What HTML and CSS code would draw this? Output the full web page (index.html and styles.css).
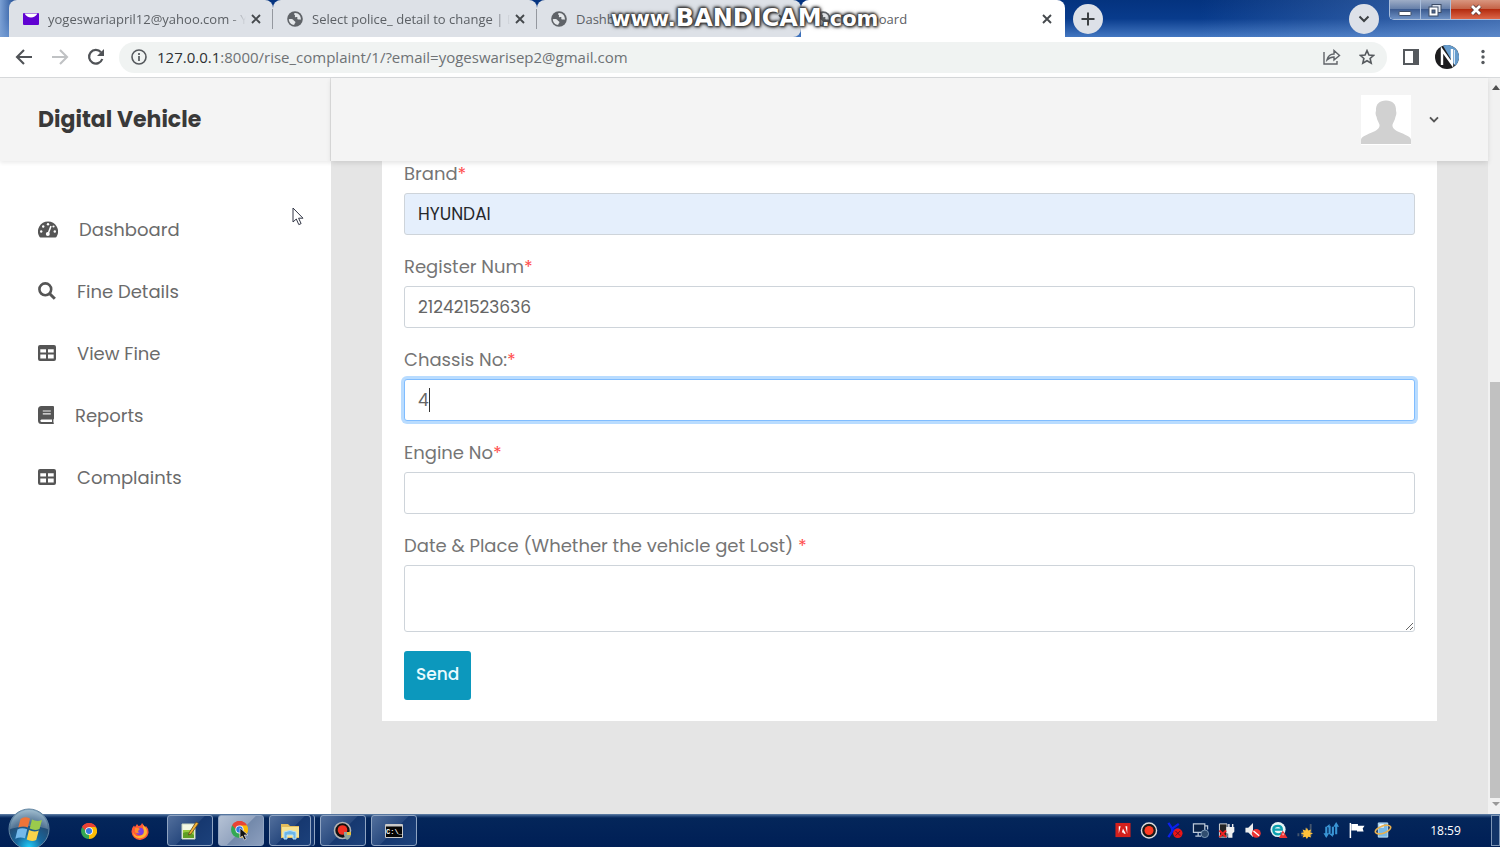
FILE: index.html
```html
<!DOCTYPE html>
<html lang="en">
<head>
<meta charset="utf-8">
<title>Dashboard</title>
<link rel="stylesheet" href="styles.css">
</head>
<body>
<svg class="defs" aria-hidden="true">
  <symbol id="globe" viewBox="0 0 16 16"><circle cx="8" cy="8" r="7.8" fill="#5f6368"/><path d="M1.8 8.300c2-.5 4.200-.2 4.800.9.500 1.100 1.700.8 1.800 2 0 1-1.200 1.300-1.200 2.800C4.300 13.900 2 11.500 1.800 8.300zM8 2c-1.600.5-1 1.500-.2 1.900.9.500-.5 1.400.3 2 .900.700 1.700-.4 2.300.5.500.8-.8 1.300.2 1.900 1.100.6 1.900-.1 3.300.4C14.200 5 11.600 1.800 8 2z" fill="#e4e7ea"/></symbol>
  <symbol id="close" viewBox="0 0 12 12"><path d="M2 2l8 8M10 2l-8 8" stroke="#45494d" stroke-width="1.900"/></symbol>
  <symbol id="table" viewBox="0 0 18 16"><path fill-rule="evenodd" fill="#555" d="M2 0h14q2 0 2 2v12q0 2-2 2H2q-2 0-2-2V2q0-2 2-2zM2.300 4.200v3.300H8V4.200zM10 4.200v3.300h5.700V4.200zM2.300 9.500v3.900H8V9.500zM10 9.500v3.900h5.700V9.500z"/></symbol>
  <symbol id="chrome" viewBox="0 0 20 20"><path d="M10 10L1.400 5A10 10 0 0 1 18.700 5z" fill="#e94335"/><path d="M10 10L18.700 5A10 10 0 0 1 10 20z" fill="#fbbc05"/><path d="M10 10v10A10 10 0 0 1 1.400 5z" fill="#34a853"/><path d="M10 5h8.700L14 12z" fill="#fbbc05"/><path d="M1.400 5L6 13l4-3z" fill="#34a853"/><path d="M1.400 5A10 10 0 0 1 18.700 5H10l-4 5z" fill="#e94335"/><circle cx="10" cy="10" r="4.800" fill="#fff"/><circle cx="10" cy="10" r="3.800" fill="#3478e5"/></symbol>
</svg>

<div class="window">
  <div class="tabstrip">
    <div class="tab">
      <svg class="favicon" viewBox="0 0 16 16"><rect y="2" width="16" height="12" rx="1" fill="#6001d2"/><path d="M1.500 2.500h13Q12 6.500 8 6.500T1.500 2.500z" fill="#fff"/></svg>
      <span class="tab-title">yogeswariapril12@yahoo.com - Y</span>
      <button class="tab-close" aria-label="Close tab"><svg width="12" height="12"><use href="#close"/></svg></button>
    </div>
    <div class="tab">
      <svg class="favicon"><use href="#globe"/></svg>
      <span class="tab-title">Select police_ detail to change | D</span>
      <button class="tab-close" aria-label="Close tab"><svg width="12" height="12"><use href="#close"/></svg></button>
    </div>
    <div class="tab tab-last">
      <svg class="favicon"><use href="#globe"/></svg>
      <span class="tab-title">Dashboard</span>
      <button class="tab-close" aria-label="Close tab"><svg width="12" height="12"><use href="#close"/></svg></button>
    </div>
    <div class="tab tab-active">
      <svg class="favicon"><use href="#globe"/></svg>
      <span class="tab-title">Dashboard</span>
      <button class="tab-close" aria-label="Close tab"><svg width="12" height="12"><use href="#close"/></svg></button>
    </div>
    <button class="round" aria-label="New tab"><svg width="14" height="14" viewBox="0 0 14 14"><path d="M7 .5v13M.5 7h13" stroke="#3c4043" stroke-width="2"/></svg></button>
    <button class="round round-search" aria-label="Search tabs"><svg width="12" height="8" viewBox="0 0 12 8"><path d="M1.500 1.500L6 6l4.500-4.500" fill="none" stroke="#3c4043" stroke-width="2"/></svg></button>
    <div class="controls">
      <button class="control" aria-label="Minimize"><svg width="14" height="16" viewBox="0 0 14 16"><rect x="1" y="9.500" width="12" height="4" rx="1" fill="#fff" stroke="#3d4c66"/></svg></button>
      <button class="control" aria-label="Restore"><svg width="14" height="14" viewBox="0 0 14 14"><rect x="4" y="1.500" width="9" height="8" fill="#dce3ee" stroke="#3d4c66"/><rect x="1" y="4" width="9" height="9" fill="#fff" stroke="#3d4c66"/><rect x="4" y="7" width="3" height="3" fill="#4d6590" stroke="#3d4c66"/></svg></button>
      <button class="control control-close" aria-label="Close"><svg width="14" height="12" viewBox="0 0 14 12"><path d="M3 2l8 8M11 2l-8 8" stroke="#5b3a3a" stroke-width="4.500"/><path d="M3 2l8 8M11 2l-8 8" stroke="#fff" stroke-width="2.800"/></svg></button>
    </div>
    <div class="watermark"><span class="mark-small">www.</span>BANDICAM<span class="mark-small">.com</span></div>
  </div>

  <div class="toolbar">
    <button class="tool" aria-label="Back"><svg viewBox="0 0 18 18"><path d="M17 9H2.500M9 2L2 9l7 7" fill="none" stroke="#505357" stroke-width="2.100"/></svg></button>
    <button class="tool" aria-label="Forward"><svg viewBox="0 0 18 18"><path d="M1 9h14.500M9 2l7 7-7 7" fill="none" stroke="#c0c2c4" stroke-width="2.100"/></svg></button>
    <button class="tool" aria-label="Reload"><svg viewBox="0 0 18 18"><path d="M15.300 11A6.800 6.800 0 1 1 14 4.300" fill="none" stroke="#505357" stroke-width="2.200"/><path d="M17 1v7h-7z" fill="#505357"/></svg></button>
    <div class="omnibox">
      <svg width="16" height="16" viewBox="0 0 16 16"><circle cx="8" cy="8" r="7" fill="none" stroke="#55595d" stroke-width="1.600"/><path d="M8 7v5M8 4v2" stroke="#55595d" stroke-width="1.700"/></svg>
      <div class="url"><span class="host">127.0.0.1</span>:8000/rise_complaint/1/?email=yogeswarisep2@gmail.com</div>
      <button class="plain" aria-label="Share"><svg width="18" height="16" viewBox="0 0 18 16"><path d="M1 3v12h13v-3M4 11c1-4 3-6 7-6V1.500L16.500 6.500 11 11V8C8 8 6 9 4 11z" fill="none" stroke="#5f6368" stroke-width="1.400"/></svg></button>
      <button class="plain" aria-label="Bookmark"><svg width="16" height="16" viewBox="0 0 18 18"><path d="M9 1.800l2.200 4.900 5.300.5-4 3.500 1.200 5.300L9 13.200 4.300 16l1.200-5.300-4-3.500 5.300-.5z" fill="none" stroke="#55595d" stroke-width="1.800"/></svg></button>
    </div>
    <div class="tools-end">
      <button class="plain" aria-label="Side panel"><svg width="16" height="16" viewBox="0 0 16 16"><rect x="1" y="1" width="14" height="14" fill="#fff" stroke="#55595d" stroke-width="2"/><path d="M10 1h5v14h-5z" fill="#55595d"/></svg></button>
      <button class="plain" aria-label="Profile"><svg width="24" height="24" viewBox="0 0 24 24"><circle cx="12" cy="12" r="12" fill="#1c1c1e"/><path d="M8 .7A12 12 0 0 1 20 21z" fill="#659bcc"/><path d="M7 20V5l10 14V4" fill="none" stroke="#fff" stroke-width="2.400"/><path d="M19.500 5v14" stroke="#d8e7f5"/></svg></button>
      <button class="plain menu" aria-label="Menu"><svg width="4" height="16" viewBox="0 0 4 16"><circle cx="2" cy="2.500" r="1.700" fill="#55595d"/><circle cx="2" cy="8" r="1.700" fill="#55595d"/><circle cx="2" cy="13.500" r="1.700" fill="#55595d"/></svg></button>
    </div>
  </div>

  <div class="viewport">
    <aside class="sidebar">
      <div class="brand">Digital Vehicle</div>
      <nav class="nav">
        <a class="nav-link" href="#"><svg width="20" height="17" viewBox="0 0 20 17"><path d="M10 .5A10 10 0 0 0 1.300 15.500q.4.900 1.300.9h14.800q.9 0 1.300-.9A10 10 0 0 0 10 .5z" fill="#555"/><path d="M9.800 13.500L13 5" stroke="#fff" stroke-width="1.500"/><circle cx="9.800" cy="13" r="2" fill="#fff"/><g fill="#fff"><circle cx="10" cy="3.300" r="1.200"/><circle cx="5.200" cy="5.500" r="1.200"/><circle cx="3.200" cy="10.500" r="1.200"/><circle cx="15.500" cy="5.500" r="1.100"/><circle cx="16.800" cy="10.500" r="1.200"/></g></svg>Dashboard</a>
        <a class="nav-link" href="#"><svg width="18" height="18" viewBox="0 0 18 18"><circle cx="7.300" cy="7.300" r="5.900" fill="none" stroke="#555" stroke-width="2.600"/><path d="M11.500 11.500l5.300 5.300" stroke="#555" stroke-width="3"/></svg>Fine Details</a>
        <a class="nav-link" href="#"><svg width="18" height="16"><use href="#table"/></svg>View Fine</a>
        <a class="nav-link" href="#"><svg width="16" height="18" viewBox="0 0 16 18"><path fill-rule="evenodd" fill="#555" d="M3.500 0H15q1 0 1 1v11.500q0 .7-.6 1v3q.6.200.6.800 0 .7-1 .7H3.500Q0 18 0 14.500v-11Q0 0 3.500 0zM3.500 13.500q-1.200.2-1.200 1.200t1.200 1.200H14v-2.400z"/><path d="M4.800 5h8M4.800 7.800h8" stroke="#eee" stroke-width="1.200"/></svg>Reports</a>
        <a class="nav-link" href="#"><svg width="18" height="16"><use href="#table"/></svg>Complaints</a>
      </nav>
    </aside>
    <main class="main">
      <header class="header">
        <svg width="50" height="50" viewBox="0 0 50 50"><path d="M0 0h50v50H0z" fill="#fff"/><path d="M25 5.500c-6.500 0-10.500 3.500-10 10.500-.6 1-.6 4 .6 6 .5 3.500 2.600 6 3 8 0 4-4 6-9 8C4.500 40.300 0 42 0 45v4h50v-4c0-3-4.500-4.700-9.600-7-5-2-9-4-9-8 .4-2 2.500-4.500 3-8 1.200-2 1.200-5 .6-6 .5-7-3.500-10.500-10-10.500z" fill="#d1d1d1"/></svg>
        <button class="plain" aria-label="Account menu"><svg width="10" height="7" viewBox="0 0 10 7"><path d="M1 1.300l4 4 4-4" fill="none" stroke="#555" stroke-width="1.900"/></svg></button>
      </header>
      <form class="card">
        <div class="field">
          <label for="brand">Brand<span class="req">*</span></label>
          <input class="input input-filled" id="brand" type="text" value="HYUNDAI">
        </div>
        <div class="field">
          <label for="register">Register Num<span class="req">*</span></label>
          <input class="input" id="register" type="text" value="212421523636">
        </div>
        <div class="field">
          <label for="chassis">Chassis No:<span class="req">*</span></label>
          <div class="focus-wrap"><input class="input input-focus" id="chassis" type="text" value="4"><span class="caret"></span></div>
        </div>
        <div class="field">
          <label for="engine">Engine No<span class="req">*</span></label>
          <input class="input" id="engine" type="text">
        </div>
        <div class="field">
          <label for="place">Date &amp; Place (Whether the vehicle get Lost) <span class="req">*</span></label>
          <textarea class="input textarea" id="place"></textarea>
        </div>
        <button class="send" type="button">Send</button>
      </form>
    </main>
    <div class="scrollbar">
      <svg class="arrow" viewBox="0 0 10 16"><path d="M2 12l4-5 4 5z" fill="#505050"/></svg>
      <div class="track-space"></div>
      <div class="thumb"></div>
      <svg class="arrow" viewBox="0 0 10 16"><path d="M2 4l4 4 4-4z" fill="#999"/></svg>
    </div>
    <svg class="pointer" viewBox="0 0 12 19"><path d="M1 1v14l3.300-3 2.500 5.600 2.300-1-2.500-5.400H11z" fill="#fff" stroke="#333746"/></svg>
  </div>

  <div class="taskbar">
    <button class="orb" aria-label="Start"><svg width="42" height="42" viewBox="0 0 42 42"><defs><radialGradient id="orb" cx=".5" cy=".95" r=".95"><stop offset="0" stop-color="#20cdfa"/><stop offset=".35" stop-color="#19669b"/><stop offset=".65" stop-color="#234e77"/><stop offset="1" stop-color="#8bb0c6"/></radialGradient></defs><circle cx="21" cy="21" r="20" fill="url(#orb)" stroke="#6486a2"/><path d="M2 21a19 19 0 0 1 38 0q-18-6-38 0z" fill="#fff" opacity=".22"/><path d="M12.500 11q4-3 9.500-.5l-2.200 9q-4.500-2.200-9.500 0z" fill="#ee7439"/><path d="M24 11.500q5 2.500 10 .5l-2.500 9q-4.500 2-9.800-.5z" fill="#9bca4c"/><path d="M9.500 21.500q4.500-2.500 9.700-.2l-2.200 9q-5-2-9.700.5z" fill="#74b9eb"/><path d="M21 22q5 2.500 9.800.5l-2.600 9.500q-4.300 2.200-9.500-.4z" fill="#fad34b"/></svg></button>
    <button class="pin" aria-label="Chrome"><svg width="16" height="16"><use href="#chrome"/></svg></button>
    <button class="pin" aria-label="Firefox"><svg width="18" height="18" viewBox="0 0 18 18"><path d="M6 2l1.500 2Q10 4 11 1l3 4 1-1q3 3 2.500 7A8.600 8.600 0 0 1 .5 10Q.3 6 3 3.500L4 5z" fill="#ff5a36"/><path d="M12 3q6 5 3 10-3 4-8 3-5-1-5-6 2 5 6 4 6 0 4-11z" fill="#ffb62e"/><circle cx="9" cy="9.500" r="3.800" fill="#7b3fe0"/><path d="M4 6q3-1 5 1L7 9q0 2 2 2-3 1-5-1z" fill="#ff8a2a"/></svg></button>
    <button class="task" aria-label="Notepad++"><svg width="20" height="20" viewBox="0 0 20 20"><path d="M2 3h13v15H2z" fill="#f3f8e4" stroke="#c9d5be"/><path d="M3 9h11v8H3z" fill="#9acb3e"/><path d="M3 12q5-3 11 2v3H3z" fill="#5f9e25"/><path d="M9 12L16 1l2.500 1.500L11 13l-2.500 1z" fill="#f1b135" stroke="#5d431e" stroke-width=".8"/></svg></button>
    <button class="task task-active" aria-label="Chrome window"><svg width="20" height="20" viewBox="0 0 20 20"><use href="#chrome" width="17" height="17"/><path d="M9 7v10l2.300-2 2 4 2-1-2-4H17z" fill="#111" stroke="#dde" stroke-width=".7"/></svg></button>
    <button class="task task-stack" aria-label="File explorer"><svg width="20" height="20" viewBox="0 0 20 20"><path d="M1 3h7l2 2h9v12H1z" fill="#e5bd5b"/><path d="M2 6h17v10H2z" fill="#f8e391"/><path d="M4 18v-7q6-3 12 0v7h-3v-4H7v4z" fill="#6db6e8" stroke="#b9e2f8"/></svg></button>
    <button class="task" aria-label="Bandicam"><svg width="20" height="20" viewBox="0 0 20 20"><circle cx="9.500" cy="9.500" r="8" fill="#111" stroke="#b4b4b4" stroke-width="1.600"/><circle cx="9.500" cy="9" r="4.800" fill="#f23122"/><path d="M11 11h7v3q-1 4-4 5-3-2-3-5z" fill="#8aa39b"/><path d="M14 11h4v3h-4z" fill="#e4bf3f"/></svg></button>
    <button class="task" aria-label="Command prompt"><svg width="18" height="14" viewBox="0 0 18 14"><path d="M.5.500h17v13H.5z" fill="#050505" stroke="#c9c9c9"/><path d="M1 1h16v1.500H1z" fill="#c9c9c9"/><text class="prompt" x="1" y="10">C:\_</text></svg></button>
    <div class="tray">
      <svg viewBox="0 0 18 18"><path d="M1 1h16v15H1z" fill="#d4201c"/><path d="M4.500 12.500V4.500h2zM13.500 12.500V4.500h-2zM9 7l3 5.500h-2L9.300 11H7.800z" fill="#fff"/></svg>
      <svg viewBox="0 0 18 18"><circle cx="9" cy="9" r="8" fill="#181818" stroke="#dedede" stroke-width="1.500"/><circle cx="9" cy="9" r="4.800" fill="#ff3b23"/></svg>
      <svg viewBox="0 0 18 18"><path d="M2 1l4 6 7-5M2 16l4-6 7-3M6 7v4" fill="none" stroke="#0b20ee" stroke-width="2.500"/><circle cx="12" cy="12" r="5" fill="#ea1616"/><path d="M9.500 9.500l5 5M14.500 9.500l-5 5" stroke="#5b0c25"/></svg>
      <svg viewBox="0 0 18 18"><path d="M1 2h12v9H1zM6 11v4M3 15h6M13 4h3v4" fill="#0b2348" stroke="#bdc9d9" stroke-width="1.300"/><circle cx="13" cy="12.500" r="4" fill="#304d70" stroke="#7f9bb8"/></svg>
      <svg viewBox="0 0 18 18"><path d="M1 2h8v14H1z" fill="#242424" stroke="#ddd"/><path d="M9 6h7v4l-2 2v4h-3v-4l-2-1zM11 2v4M15 2v4" fill="#eee" stroke="#eee" stroke-width="1.500"/><path d="M1 9l7 7M8 9l-7 7" stroke="#e22" stroke-width="2.200"/></svg>
      <svg viewBox="0 0 18 18"><path d="M1 6h3l5-5v15l-5-5H1z" fill="#eee"/><circle cx="12.500" cy="12" r="4.700" fill="#e33"/><path d="M9.500 9.500l6 5" stroke="#fff" stroke-width="1.500"/></svg>
      <svg viewBox="0 0 18 18"><circle cx="8" cy="8" r="8" fill="#e7f4f5"/><path d="M4 8h8q0-4-4-4-5 0-5 4 0 5 5 5 3 0 4-2" fill="none" stroke="#0ba0b0" stroke-width="2.400"/><path d="M13 9l5 8H9z" fill="#e33"/><path d="M13.300 12v2" stroke="#fff"/></svg>
      <svg viewBox="0 0 18 18"><path d="M1 12h2v3H1zM5 10h2v5H5zM9 6h2v9H9zM14 2h2v13h-2z" fill="#44556e"/><path d="M11 6l1.500 3 3-1-1 3 3 1-3 1.500 1 3-3-1-1.500 2.500-1.500-2.500-3 1 1-3-3-1.500 3-1-1-3 3 1z" fill="#ffc13a"/></svg>
      <svg viewBox="0 0 18 18"><path d="M4 15V5M7.500 4v9M11 14V5M14.500 3v10" stroke="#3a95d5" stroke-width="2.200"/><path d="M1 12h6l-3 5zM4 5l3.500-3v4zM7.500 13L11 16v-4zM11.500 5L14.500 0l3 5z" fill="#3a95d5"/></svg>
      <svg viewBox="0 0 18 18"><path d="M2 1v16" stroke="#fff" stroke-width="1.600"/><path d="M3 2h7v2h7l-2 3 1 3H9V9H3z" fill="#fff"/></svg>
      <svg viewBox="0 0 18 18"><path d="M4 1h10v15H4z" fill="#77b9e7" stroke="#c6e5f8"/><path d="M5 2h5v4H5z" fill="#ecf6ff"/><ellipse cx="9" cy="8" rx="8.500" ry="3.800" transform="rotate(-20 9 8)" fill="none" stroke="#eab14e" stroke-width="1.800"/></svg>
    </div>
    <time class="clock">18:59</time>
    <button class="desktop" aria-label="Show desktop"></button>
  </div>
</div>
</body>
</html>
```
FILE: styles.css
```css
* { box-sizing: border-box; }
body { margin: 0; font-family: "Open Sans", "Noto Sans", sans-serif; overflow: hidden; }
button { margin: 0; padding: 0; border: 0; background: none; font: inherit; color: inherit; flex: none; }
svg { display: block; flex: none; }
.defs { position: absolute; width: 0; height: 0; }
.window { display: flex; flex-direction: column; height: 100vh; }

/* Tab strip */
.tabstrip {
  position: relative;
  display: flex;
  align-items: center;
  flex: none;
  height: 37px;
  padding-left: 9px;
  background: linear-gradient(90deg, #7ba0d4 0, transparent 20px, transparent 80%, #7096cf88 100%), linear-gradient(#04337f, #083b8c 50%, #4377c1);
}
.tab {
  display: flex;
  align-items: center;
  gap: 9px;
  flex: 0 1 264px;
  min-width: 0;
  height: 37px;
  padding: 0 11px 0 14px;
  background: #dde1e7;
  border-radius: 8px 8px 0 0;
  font-size: 13px;
  color: #5c6065;
}
.tab:first-child .tab-title, .tab:nth-child(2) .tab-title {
  -webkit-mask-image: linear-gradient(90deg, #000 calc(100% - 16px), transparent);
  mask-image: linear-gradient(90deg, #000 calc(100% - 16px), transparent);
}
.tab:not(.tab-last):not(.tab-active)::after { content: ""; flex: none; width: 1px; height: 20px; margin-right: -11px; background: #94989f; }
.tab-last { border-bottom-right-radius: 8px; }
.tab-active { background: #fff; }
.tab-title { flex: 1; margin-right: -6px; overflow: hidden; white-space: nowrap; }
.favicon { width: 16px; height: 16px; }
.tab-close { display: grid; place-items: center; width: 14px; height: 14px; }
.round { display: grid; place-items: center; width: 30px; height: 30px; margin-left: 8px; border-radius: 50%; background: #dde1e8; }
.round-search { margin-left: auto; }
.controls {
  display: flex;
  align-self: flex-start;
  width: 111px;
  height: 20px;
  margin-left: 10px;
  border: 1px solid #a9bedc;
  border-top: 0;
  border-right: 0;
  border-radius: 0 0 0 5px;
  overflow: hidden;
}
.control { display: grid; place-items: center; flex: 1; background: linear-gradient(#9eadc6, #6881aa 45%, #3c5b90 50%, #6e91c4); border-right: 1px solid #a9bedc; }
.control-close { flex: 0 0 49px; border: 0; background: linear-gradient(#d9967f, #c56549 45%, #b42c10 50%, #dc6749); }
.watermark {
  position: absolute;
  left: 611px;
  top: 5px;
  font: bold 24px/26px "DejaVu Sans", sans-serif;
  color: #fff;
  white-space: nowrap;
  text-shadow: 0 0 2px #333, 0 0 3px #333, 1px 1px 3px #333, -1px -1px 3px #444, 0 0 5px #555;
}
.mark-small { font-size: 21px; }

/* Toolbar */
.toolbar { display: flex; align-items: center; flex: none; height: 41px; padding: 0 15px; background: #fff; border-bottom: 1px solid #d8dadc; }
.tool { width: 18px; margin-right: 18px; }
.tool svg { width: 18px; height: 18px; }
.omnibox { display: flex; align-items: center; gap: 18px; flex: 1; height: 31px; margin-left: -4px; padding: 0 12px; border-radius: 16px; background: #f0f3f2; }
.url { flex: 1; margin-left: -8px; font-size: 15px; color: #6e7275; white-space: nowrap; overflow: hidden; }
.host { color: #2d3033; }
.tools-end { display: flex; align-items: center; gap: 16px; margin-left: 16px; }
.menu { margin-left: 6px; }

/* Page */
.viewport { position: relative; display: flex; flex: 1; min-height: 0; font-family: Poppins, Inter, sans-serif; font-size: 18px; color: #757575; }
.sidebar { flex: none; width: 331px; background: #fff; }
.brand {
  display: flex;
  align-items: center;
  height: 83px;
  padding-left: 38px;
  background: #f4f4f4;
  border-right: 1px solid #e0e0e0;
  box-shadow: 0 2px 4px #00000014;
  font-size: 22px;
  font-weight: 700;
  color: #393939;
}
.nav { display: flex; flex-direction: column; padding: 37px 38px 0; }
.nav-link { display: flex; align-items: center; gap: 21px; height: 62px; color: #6b6b6b; text-decoration: none; }
.main { flex: 1; min-width: 0; background: #e5e5e5; }
.header { position: relative; display: flex; align-items: center; justify-content: flex-end; gap: 18px; height: 83px; padding-right: 49px; background: #f4f4f4; box-shadow: 0 2px 5px #0000001c; }
.card { display: flex; flex-direction: column; align-items: flex-start; gap: 19px; margin: 0 51px; padding: 0 22px 21px; background: #fff; }
.field { display: flex; flex-direction: column; gap: 7px; width: 100%; }
.field label { line-height: 25px; }
.req { color: #ff4b4b; }
.input { display: block; width: 100%; height: 42px; padding: 0 13px; border: 1px solid #ced4da; border-radius: 3px; background: #fff; font: inherit; font-size: 17px; color: #666; outline: 0; }
.input-filled { background: #e5effc; color: #26282b; }
.input-focus { border-color: #80bdff; box-shadow: 0 0 0 3px #b9dcff; }
.focus-wrap { position: relative; }
.caret { position: absolute; left: 25px; top: 9px; width: 1px; height: 24px; background: #333; }
.textarea { height: 67px; padding: 8px 13px; resize: vertical; }
.send { height: 49px; padding: 0 12px; border-radius: 3px; background: #0c98bd; color: #e9fbff; font-size: 17px; font-weight: 500; line-height: 47px; padding-bottom: 2px; }
.scrollbar { display: flex; flex-direction: column; width: 12px; padding-left: 2px; background: #f1f1f1; }
.arrow { width: 10px; height: 16px; }
.track-space { flex: 287; }
.thumb { flex: 415; background: #c1c1c1; }
.pointer { position: absolute; left: 292px; top: 129px; width: 12px; height: 19px; }

/* Taskbar */
.taskbar { position: relative; display: flex; align-items: center; flex: none; height: 33px; padding-left: 8px; background: linear-gradient(#6584a9 0, #274b7d 2px, #04265a 4px, #001f56); }
.orb { align-self: flex-end; width: 42px; height: 39px; overflow: hidden; margin-right: 27px; }
.pin { display: grid; place-items: center; width: 24px; margin-right: 27px; }
.task {
  display: grid;
  place-items: center;
  width: 46px;
  height: 31px;
  margin-right: 5px;
  border: 1px solid #8fa4c2;
  border-radius: 3px;
  background: linear-gradient(135deg, #526f9c, #294a7f 50%, #163870 51%, #1c417b);
}
.pin + .task { margin-left: -12px; }
.task-active { background: linear-gradient(135deg, #b5c2d5, #94a5c0 50%, #7389ab 51%, #8c9fbe); }
.task-stack { width: 42px; margin-right: 9px; box-shadow: 3px 0 0 #163870, 4px 0 0 #8fa4c2; }
.prompt { font: bold 7px "Liberation Mono", monospace; fill: #fff; }
.tray { display: flex; gap: 8px; margin-left: auto; }
.tray svg { width: 18px; height: 17px; }
.clock { width: 99px; padding-left: 8px; text-align: center; font-size: 12px; color: #fff; }
.desktop { width: 9px; height: 31px; border: 1px solid #7d95b5; background: #123468; }
```
